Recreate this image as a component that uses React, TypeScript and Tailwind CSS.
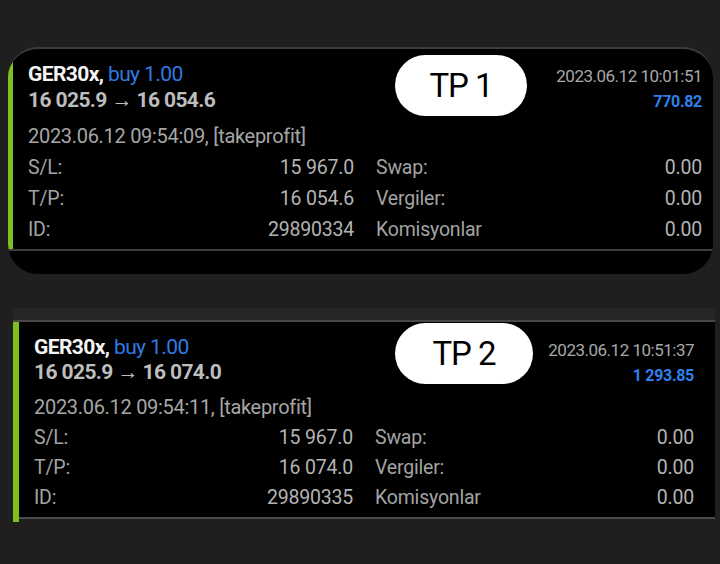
const FONT = "font-['Roboto',_'Noto_Sans',_sans-serif]";

type Deal = {
  tp: string;
  price: string;
  opened: string;
  closed: string;
  profit: string;
  sl: string;
  tpPrice: string;
  id: string;
};

const deals: Deal[] = [
  {
    tp: 'TP 1',
    price: '16 025.9 → 16 054.6',
    opened: '2023.06.12 09:54:09, [takeprofit]',
    closed: '2023.06.12 10:01:51',
    profit: '770.82',
    sl: '15 967.0',
    tpPrice: '16 054.6',
    id: '29890334',
  },
  {
    tp: 'TP 2',
    price: '16 025.9 → 16 074.0',
    opened: '2023.06.12 09:54:11, [takeprofit]',
    closed: '2023.06.12 10:51:37',
    profit: '1 293.85',
    sl: '15 967.0',
    tpPrice: '16 074.0',
    id: '29890335',
  },
];

function Row({ label, value, h }: { label: string; value: string; h: string }) {
  return (
    <div className={`flex items-center justify-between ${h}`}>
      <span className="text-[#a3a3a3]">{label}</span>
      <span className="text-[#b4b4b4]">{value}</span>
    </div>
  );
}

function Details({ d, h }: { d: Deal; h: string }) {
  return (
    <div className="grid grid-cols-2 gap-x-[22px] text-[19.5px] tracking-[-0.2px]">
      <div>
        <Row label="S/L:" value={d.sl} h={h} />
        <Row label="T/P:" value={d.tpPrice} h={h} />
        <Row label="ID:" value={d.id} h={h} />
      </div>
      <div>
        <Row label="Swap:" value="0.00" h={h} />
        <Row label="Vergiler:" value="0.00" h={h} />
        <Row label="Komisyonlar" value="0.00" h={h} />
      </div>
    </div>
  );
}

function Header({ d, lh }: { d: Deal; lh: string }) {
  return (
    <div className="flex justify-between">
      <div className="text-[21px] tracking-[-0.6px]">
        <div className={lh}>
          <span className="font-bold text-[#f4f4f4]">GER30x, </span>
          <span className="text-[#2f7be4]">buy 1.00</span>
        </div>
        <div className={`${lh} font-bold text-[#bdbdbd]`}>{d.price}</div>
      </div>
      <div className="flex flex-col items-end pt-[2px]">
        <div className="text-[17px] tracking-[-0.5px] leading-[26px] text-[#a8a8a8]">{d.closed}</div>
        <div className="text-[16px] tracking-[-0.3px] leading-[26px] font-bold text-[#2f80ed]">{d.profit}</div>
      </div>
    </div>
  );
}

function Pill({ text, cls }: { text: string; cls: string }) {
  return (
    <div
      className={`absolute flex items-center justify-center rounded-full bg-white text-[33px] tracking-[-1px] text-black ${cls}`}
    >
      {text}
    </div>
  );
}

export default function App() {
  const [a, b] = deals;
  return (
    <div className={`${FONT} h-[564px] w-[720px] overflow-hidden bg-[#1f1f1f]`}>
      {/* first card, rounded */}
      <div className="relative ml-[8px] mr-[7px] mt-[47px] overflow-hidden rounded-[30px] border-t-2 border-[#3c3c3c] bg-black">
        <Pill text={a.tp} cls="left-[387px] top-[6px] h-[61px] w-[132px]" />
        <div className="flex">
          <div className="w-[5px] shrink-0 bg-[#7fbf1e]" />
          <div className="flex-1 pb-[4px] pl-[15px] pr-[11px] pt-[12px]">
            <Header d={a} lh="leading-[26px]" />
            <div className="mt-[7px] text-[20px] tracking-[-0.3px] leading-[28px] text-[#a6a6a6]">{a.opened}</div>
            <div className="mt-[2px]">
              <Details d={a} h="h-[31px]" />
            </div>
          </div>
        </div>
        <div className="h-[2px] bg-[#3e3e3e]" />
        <div className="h-[23px]" />
      </div>

      {/* second card, square */}
      <div className="relative ml-[13px] mr-[5px] mt-[34px]">
        <div className="h-[12px] bg-[#262626]" />
        <div className="h-[2px] bg-[#474747]" />
        <Pill text={b.tp} cls="left-[382px] top-[15px] h-[61px] w-[138px]" />
        <div className="flex bg-black">
          <div className="w-[6px] shrink-0 bg-[#7fbf1e]" />
          <div className="flex-1 pb-[4px] pl-[15px] pr-[21px] pt-[13px]">
            <Header d={b} lh="leading-[25px]" />
            <div className="mt-[4px] text-[20px] tracking-[-0.3px] leading-[28px] text-[#a6a6a6]">{b.opened}</div>
            <div className="mt-[2px]">
              <Details d={b} h="h-[30px]" />
            </div>
          </div>
        </div>
        <div className="flex">
          <div className="w-[6px] bg-[#7fbf1e]" />
          <div className="h-[2px] flex-1 bg-[#4a4a4a]" />
        </div>
        <div className="flex h-[3px]">
          <div className="w-[6px] bg-[#7fbf1e]" />
        </div>
      </div>
    </div>
  );
}
